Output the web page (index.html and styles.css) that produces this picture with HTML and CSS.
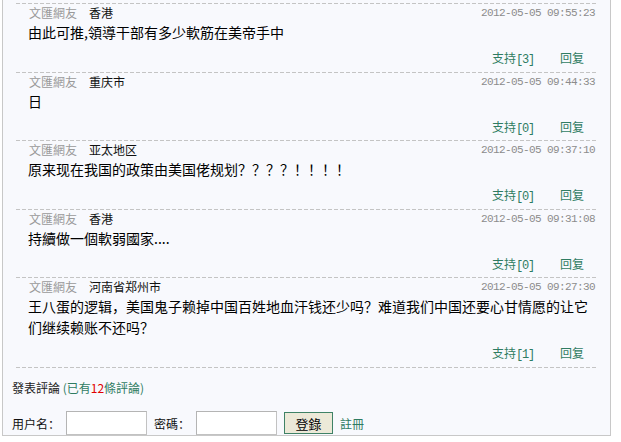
FILE: index.html
```html
<!DOCTYPE html>
<html>
<head>
<meta charset="utf-8">
<link rel="stylesheet" href="styles.css">
</head>
<body>
<div class="box">
  <div class="comments">
    <div class="comment">
      <div class="head"><span class="user">文匯網友</span><span class="loc">香港</span><span class="date">2012-05-05 09:55:23</span></div>
      <div class="text">由此可推,領導干部有多少軟筋在美帝手中</div>
      <div class="actions"><a class="act">支持<span class="num">[3]</span></a><a class="act reply">回复</a></div>
    </div>
    <div class="comment">
      <div class="head"><span class="user">文匯網友</span><span class="loc">重庆市</span><span class="date">2012-05-05 09:44:33</span></div>
      <div class="text">日</div>
      <div class="actions"><a class="act">支持<span class="num">[0]</span></a><a class="act reply">回复</a></div>
    </div>
    <div class="comment">
      <div class="head"><span class="user">文匯網友</span><span class="loc">亚太地区</span><span class="date">2012-05-05 09:37:10</span></div>
      <div class="text">原来现在我国的政策由美国佬规划？？？？！！！！</div>
      <div class="actions"><a class="act">支持<span class="num">[0]</span></a><a class="act reply">回复</a></div>
    </div>
    <div class="comment">
      <div class="head"><span class="user">文匯網友</span><span class="loc">香港</span><span class="date">2012-05-05 09:31:08</span></div>
      <div class="text">持續做一個軟弱國家....</div>
      <div class="actions"><a class="act">支持<span class="num">[0]</span></a><a class="act reply">回复</a></div>
    </div>
    <div class="comment">
      <div class="head"><span class="user">文匯網友</span><span class="loc">河南省郑州市</span><span class="date">2012-05-05 09:27:30</span></div>
      <div class="text">王八蛋的逻辑，美国鬼子赖掉中国百姓地血汗钱还少吗？难道我们中国还要心甘情愿的让它们继续赖账不还吗？</div>
      <div class="actions"><a class="act">支持<span class="num">[1]</span></a><a class="act reply">回复</a></div>
    </div>
  </div>
  <div class="post-title">發表評論 <span class="count">(已有<span class="red">12</span>條評論)</span></div>
  <form class="login">
    <label class="lbl">用户名：</label><input class="field" type="text">
    <label class="lbl">密碼：</label><input class="field" type="password">
    <button class="btn" type="button">登錄</button><a class="reg">註冊</a>
  </form>
</div>
</body>
</html>
```

FILE: styles.css
```css
html, body {
  margin: 0;
  padding: 0;
  background: #ffffff;
}
body {
  font-family: "Noto Sans CJK SC", "Noto Sans CJK TC", sans-serif;
  font-size: 12px;
  color: #000;
}
.box {
  margin-left: 2px;
  width: 607px;
  height: 432px;
  padding-top: 3px;
  background: #f8f9fd;
  border-left: 1px solid #c8c8c8;
  border-right: 1px solid #c8c8c8;
  border-bottom: 1px solid #c8c8c8;
  overflow: hidden;
}
.comments {
  margin: 0 13px;
  padding-bottom: 1px;
  background: repeating-linear-gradient(to right, #c4c4c4 0 4px, transparent 4px 6px) left bottom / 100% 1px no-repeat;
}
.comment {
  padding: 1px 2px 4.5px 12px;
  background: repeating-linear-gradient(to right, #c4c4c4 0 4px, transparent 4px 6px) left top / 100% 1px no-repeat;
}
.head {
  display: flex;
  align-items: center;
  height: 18px;
  line-height: 18px;
}
.user {
  color: #9a9a9a;
  margin-left: 1px;
}
.loc {
  color: #111;
  margin-left: 12px;
}
.date {
  margin-left: auto;
  font-family: "Liberation Mono", monospace;
  font-size: 11px;
  letter-spacing: -0.6px;
  color: #8c8c8c;
}
.text {
  font-size: 14px;
  line-height: 21px;
  color: #000;
}
.actions {
  display: flex;
  justify-content: flex-end;
  gap: 25px;
  margin-top: 6px;
  height: 18px;
  line-height: 18px;
  padding-right: 11px;
}
.act {
  color: #2f7c62;
  text-decoration: none;
}
.num {
  font-family: "Liberation Mono", monospace;
  font-size: 12px;
  letter-spacing: -1.2px;
  padding-right: 1px;
}
.post-title {
  margin-top: 11px;
  margin-left: 9px;
  height: 18px;
  line-height: 18px;
  color: #222;
}
.count {
  color: #2f7c62;
}
.red {
  color: #e00000;
}
.login {
  display: flex;
  align-items: center;
  margin: 14.5px 0 0 9px;
  height: 24px;
}
.lbl {
  color: #111;
  font-size: 12px;
  margin-right: 6px;
}
.field {
  box-sizing: border-box;
  width: 81px;
  height: 24px;
  margin: 0 7px 0 0;
  padding: 0;
  border: 1px solid #c2c2c2;
  border-top-color: #b4b4b4;
  border-left-color: #b4b4b4;
  background: #fff;
}
.btn {
  box-sizing: border-box;
  width: 49px;
  height: 22px;
  margin: 0 7px 0 0;
  padding: 0;
  border: 1px solid #3f8266;
  background: #ece9d8;
  font-family: "Noto Sans CJK TC", "Noto Sans CJK SC", sans-serif;
  font-size: 13px;
  color: #000;
}
.reg {
  color: #2f7c62;
  font-size: 12px;
}
```
